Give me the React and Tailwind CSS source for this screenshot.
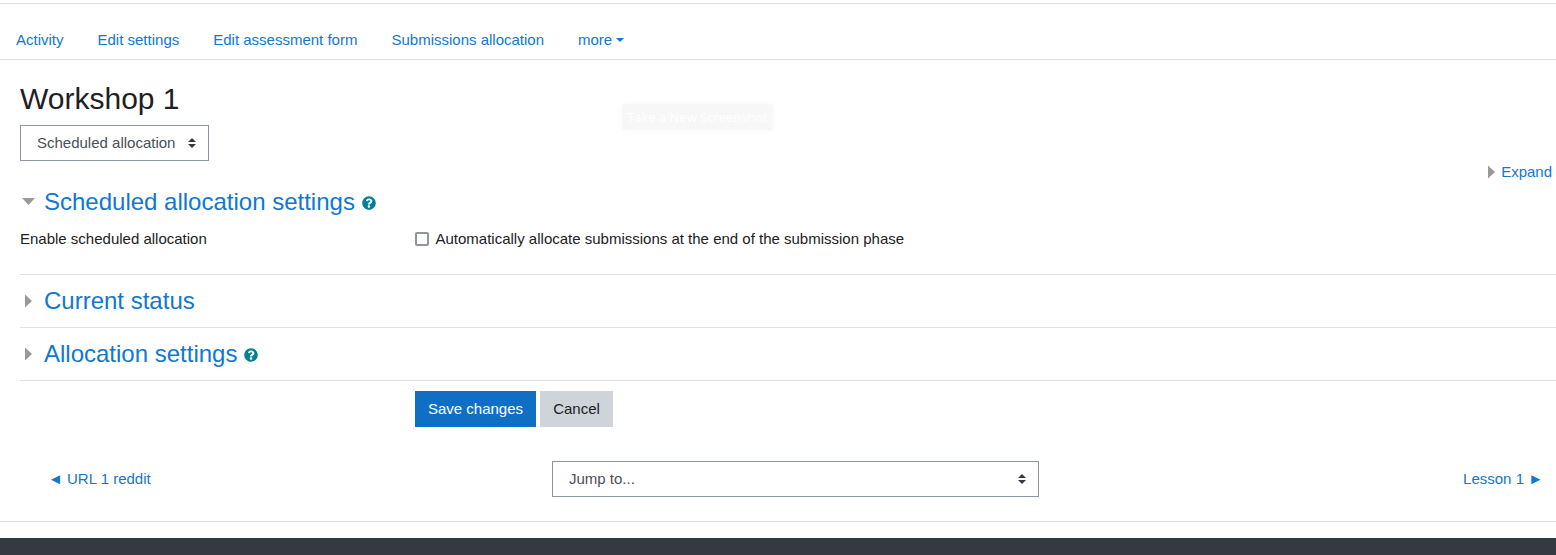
const LINK = "text-[#1177d1]";

function SelectArrows() {
  return (
    <svg width="8" height="10" viewBox="0 0 8 10" className="shrink-0">
      <path d="M4 0L8 4H0Z M0 6H8L4 10Z" fill="#343a40" />
    </svg>
  );
}

function Help() {
  return (
    <svg width="14" height="14" viewBox="0 0 512 512" className="shrink-0">
      <path
        fill="#008196"
        d="M504 256c0 136.997-111.043 248-248 248S8 392.997 8 256C8 119.083 119.043 8 256 8s248 111.083 248 248zM262.655 90c-54.497 0-89.255 22.957-116.549 63.758-3.536 5.286-2.353 12.415 2.715 16.258l34.699 26.310c5.205 3.947 12.621 3.008 16.665-2.122 17.864-22.658 30.113-35.797 57.303-35.797 20.429 0 45.698 13.148 45.698 32.958 0 14.976-12.363 22.667-32.534 33.976C247.128 238.528 216 254.941 216 296v4c0 6.627 5.373 12 12 12h56c6.627 0 12-5.373 12-12v-1.333c0-28.462 83.186-29.647 83.186-106.667 0-58.002-60.165-102-116.531-102zM256 338c-25.365 0-46 20.635-46 46 0 25.364 20.635 46 46 46s46-20.636 46-46c0-25.365-20.635-46-46-46z"
      />
    </svg>
  );
}

function Caret({ open }) {
  return open ? (
    <svg width="14" height="7" viewBox="0 0 14 7" className="ml-[1px] shrink-0">
      <path d="M1 0H14L7.500 7Z" fill="#999" />
    </svg>
  ) : (
    <svg width="7" height="14" viewBox="0 0 7 14" className="ml-[5px] shrink-0">
      <path d="M0 0.500L7 7L0 13.500Z" fill="#999" />
    </svg>
  );
}

function SectionHead({ title, open, help, className }) {
  return (
    <div className={`flex items-center ${className}`}>
      <div className="flex w-6 items-center">
        <Caret open={open} />
      </div>
      <h3 className={`text-[24px] leading-[28px] ${LINK}`}>{title}</h3>
      {help && (
        <span className="ml-[7px] mt-[2px] flex">
          <Help />
        </span>
      )}
    </div>
  );
}

export default function App() {
  const tabs = ["Activity", "Edit settings", "Edit assessment form", "Submissions allocation"];
  return (
    <div
      className="relative flex h-[555px] flex-col overflow-hidden bg-white text-[15px] leading-[22.500px] text-[#1d2125]"
      style={{ fontFamily: '"Liberation Sans", Arial, sans-serif' }}
    >
      <div className="h-1 border-b border-[#dee2e6]" />

      <nav className="flex h-[56px] items-end gap-[34px] border-b border-[#dee2e6] pb-[8px] pl-4">
        {tabs.map((t) => (
          <a key={t} className={LINK}>
            {t}
          </a>
        ))}
        <a className={`flex items-center ${LINK}`}>
          more
          <span className="ml-[4px] mt-[1px] h-0 w-0 border-x-[4px] border-t-[4px] border-x-transparent border-t-[#1177d1]" />
        </a>
      </nav>

      <main className="pl-5">
        <h2 className="mt-[21px] text-[30px] leading-[36px] text-[#1d2125]">Workshop 1</h2>

        <div className="mt-[8px] flex h-9 w-[189px] items-center justify-between border border-[#8f959e] pl-4 pr-[12px] text-[#495057]">
          <span>Scheduled allocation</span>
          <SelectArrows />
        </div>

        <div className={`flex items-center justify-end pr-1 ${LINK}`}>
          <span className="mr-[6px] flex">
            <svg width="7" height="14" viewBox="0 0 7 14">
              <path d="M0 0.500L7 7L0 13.500Z" fill="#999" />
            </svg>
          </span>
          Expand
        </div>

        <SectionHead title="Scheduled allocation settings" open help className="mt-[4px]" />

        <div className="mt-[12px] flex h-[46px] items-start">
          <div className="w-[395px]">Enable scheduled allocation</div>
          <label className="flex items-center">
            <span className="mr-[6.500px] h-[14px] w-[14px] rounded-[2px] border-2 border-[#8f959e] bg-white" />
            Automatically allocate submissions at the end of the submission phase
          </label>
        </div>

        <div className="border-t border-[#dee2e6]">
          <SectionHead title="Current status" className="h-[52px]" />
        </div>
        <div className="border-t border-[#dee2e6]">
          <SectionHead title="Allocation settings" help className="h-[52px]" />
        </div>

        <div className="flex gap-1 border-t border-[#dee2e6] pl-[395px] pt-[10px]">
          <button className="h-9 w-[121px] bg-[#0f6fc5] pt-[2px] text-white">Save changes</button>
          <button className="h-9 w-[73px] bg-[#ced4da] pt-[2px] text-[#1d2125]">Cancel</button>
        </div>
      </main>

      <div className="mt-[34px] grid grid-cols-[552px_487px_1fr] items-center">
        <a className={`pl-[48px] pt-[2px] ${LINK}`}>◄ URL 1 reddit</a>
        <div className="flex h-9 items-center justify-between border border-[#8f959e] pl-4 pr-[12px] text-[#495057]">
          <span className="pt-[2px]">Jump to...</span>
          <SelectArrows />
        </div>
        <a className={`pr-[13px] pt-[2px] text-right ${LINK}`}>Lesson 1 ►</a>
      </div>

      <div className="mt-[24px] h-[17px] border-t border-[#dee2e6]" />
      <footer className="flex-1 bg-[#343a40]" />

      <div
        className="absolute left-[622px] top-[104px] flex h-[26px] w-[151px] items-center justify-center rounded-[3px] bg-[#f7f7f7] text-[13px] text-white shadow-[0_0_6px_rgba(0,0,0,0.03)]"
        style={{ fontFamily: '"Open Sans", sans-serif' }}
      >
        Take a New Screenshot
      </div>
    </div>
  );
}
